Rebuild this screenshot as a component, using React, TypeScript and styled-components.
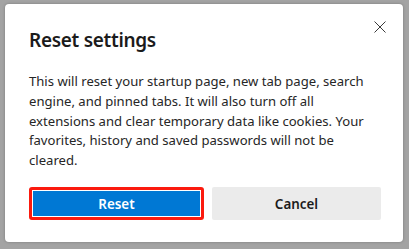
import React from "react";
import styled, { createGlobalStyle } from "styled-components";

const Global = createGlobalStyle`
  html, body { margin: 0; padding: 0; }
  body {
    background: #a3a3a3;
    font-family: "Noto Sans", "Open Sans", sans-serif;
    width: 409px;
    height: 249px;
    overflow: hidden;
  }
`;

const Page = styled.div`
  width: 409px;
  height: 249px;
  padding: 4px 6px 7px 5px;
  box-sizing: border-box;
`;

const Dialog = styled.div`
  position: relative;
  width: 398px;
  height: 238px;
  box-sizing: border-box;
  background: #ffffff;
  border-radius: 4px;
  box-shadow: 0 0 3px rgba(0, 0, 0, 0.25);
  padding: 23px 22px 22px 24px;
  display: flex;
  flex-direction: column;
`;

const Title = styled.h1`
  margin: 0;
  font-size: 19px;
  font-weight: 600;
  line-height: 27px;
  color: #1b1b1b;
  letter-spacing: -0.3px;
`;

const Close = styled.button`
  position: absolute;
  top: 12px;
  right: 12px;
  width: 22px;
  height: 22px;
  padding: 0;
  border: none;
  background: transparent;
  display: flex;
  align-items: center;
  justify-content: center;
`;

const Body = styled.p`
  margin: 18px 0 0 0;
  font-size: 13.1px;
  line-height: 19.8px;
  color: #262626;
  white-space: nowrap;
`;

const Actions = styled.div`
  margin-top: auto;
  display: flex;
  gap: 8px;
`;

const Button = styled.button<{ $primary?: boolean }>`
  flex: 1;
  height: 33px;
  box-sizing: border-box;
  border-radius: ${(p) => (p.$primary ? "3px" : "2px")};
  font-family: "Noto Sans", "Open Sans", sans-serif;
  font-size: 13.4px;
  font-weight: 600;
  padding: 0;
  border: ${(p) => (p.$primary ? "3px solid #fb1a0e" : "none")};
  background: ${(p) => (p.$primary ? "#0078d4" : "#ebebeb")};
  color: ${(p) => (p.$primary ? "#ffffff" : "#1b1b1b")};
  box-shadow: ${(p) => (p.$primary ? "inset 0 0 0 1px #ffffff" : "none")};
`;

export default function App() {
  return (
    <>
      <Global />
      <Page>
        <Dialog>
          <Title>Reset settings</Title>
          <Close aria-label="Close">
            <svg width="12" height="12" viewBox="0 0 12 12">
              <path d="M0.5 0.5 L11.5 11.5 M11.5 0.5 L0.5 11.5" stroke="#3a3a3a" strokeWidth="1" fill="none" />
            </svg>
          </Close>
          <Body>
            This will reset your startup page, new tab page, search
            <br />
            engine, and pinned tabs. It will also turn off all
            <br />
            extensions and clear temporary data like cookies. Your
            <br />
            favorites, history and saved passwords will not be
            <br />
            cleared.
          </Body>
          <Actions>
            <Button $primary>Reset</Button>
            <Button>Cancel</Button>
          </Actions>
        </Dialog>
      </Page>
    </>
  );
}
